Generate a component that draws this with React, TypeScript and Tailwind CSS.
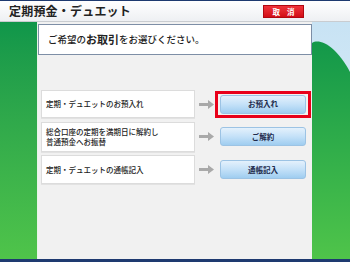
import React from 'react';

const FONT = { fontFamily: '"Noto Sans CJK JP", "Noto Sans", sans-serif' };

const ROWS = [
  { lines: ['定期・デュエットのお預入れ'], label: 'お預入れ', h: 'h-[28px]', selected: true },
  { lines: ['総合口座の定期を満期日に解約し', '普通預金へお振替'], label: 'ご解約', h: 'h-[30px]', selected: false },
  { lines: ['定期・デュエットの通帳記入'], label: '通帳記入', h: 'h-[29px]', selected: false },
];

function Arrow() {
  return (
    <svg width="15" height="9" viewBox="0 0 15 9">
      <path d="M0 3 H9 V0 L15 4.5 L9 9 V6 H0 Z" fill="#a9a9a9" />
    </svg>
  );
}

function BlueButton({ label }: { label: string }) {
  return (
    <div className="w-[86px] h-[19px] rounded-[3px] border border-[#9cc3e4] bg-gradient-to-b from-[#e4f1fc] via-[#c4e1f8] to-[#9fcdf0] flex items-center justify-center text-[7.5px] font-bold text-[#1d2b4c] leading-none">
      {label}
    </div>
  );
}

export default function App() {
  return (
    <div className="w-[350px] h-[262px] flex flex-col bg-white overflow-hidden" style={FONT}>
      {/* top line */}
      <div className="h-[1px] bg-[#1e3a70]" />

      {/* HEADER */}
      <div className="h-[21px] flex items-center justify-between pl-[9px] pr-[46px] bg-gradient-to-b from-white to-[#eef0f3] border-b border-[#c9ccd0]">
        <span className="text-[12px] font-bold text-[#222] tracking-[0.2px] leading-none">定期預金・デュエット</span>
        <div className="w-[41px] h-[13px] mt-[1px] bg-gradient-to-b from-[#f0323a] to-[#d20a14] border border-[#b00810] flex items-center justify-center gap-[7px] text-white text-[7.5px] font-bold leading-none">
          <span>取</span>
          <span>消</span>
        </div>
      </div>

      {/* MAIN */}
      <div className="flex-1 flex">
        {/* left green */}
        <div className="w-[38px] bg-gradient-to-b from-[#0f964a] to-[#4fc44a] border-r border-[#e8f4e8]" />

        {/* panel */}
        <div className="w-[274px] bg-[#f1f1f1] flex flex-col">
          <div className="mt-[2px] h-[31px] bg-white border border-[#7d8ea6] flex items-center pl-[9px] text-[9.5px] font-medium text-[#222] leading-none">
            ご希望の<span className="text-[11px] font-bold">お取引</span>をお選びください。
          </div>

          <div className="mt-[35px] flex flex-col gap-[3.5px]">
            {ROWS.map((row) => (
              <div key={row.label} className={`flex items-center ${row.h}`}>
                <div className="ml-[3px] w-[154px] h-full bg-white border border-[#dcdcdc] shadow-[0_1px_0_#e2e2e2] flex flex-col justify-center pl-[4px] text-[7.5px] font-medium text-[#222] leading-[10px]">
                  {row.lines.map((l) => (
                    <span key={l}>{l}</span>
                  ))}
                </div>
                <div className="w-[20px] flex justify-center pl-[2px]">
                  <Arrow />
                </div>
                {row.selected ? (
                  <div className="w-[96px] h-[27px] border-[3px] border-[#e8001a] flex items-center justify-center">
                    <BlueButton label={row.label} />
                  </div>
                ) : (
                  <div className="w-[96px] flex items-center justify-center">
                    <BlueButton label={row.label} />
                  </div>
                )}
              </div>
            ))}
          </div>
        </div>

        {/* right decoration */}
        <div className="w-[38px] bg-gradient-to-b from-[#c8e3f4] to-[#e6f2fa]">
          <svg width="38" height="237" viewBox="0 0 38 237" className="block">
            <defs>
              <linearGradient id="g" x1="0" y1="0" x2="0" y2="1">
                <stop offset="0" stopColor="#13984a" />
                <stop offset="1" stopColor="#4fc44a" />
              </linearGradient>
            </defs>
            <path d="M0 21 C8 16 24 24 38 50 L38 237 L0 237 Z" fill="url(#g)" />
          </svg>
        </div>
      </div>

      {/* bottom line */}
      <div className="h-[3px] bg-[#1e3a70]" />
    </div>
  );
}
